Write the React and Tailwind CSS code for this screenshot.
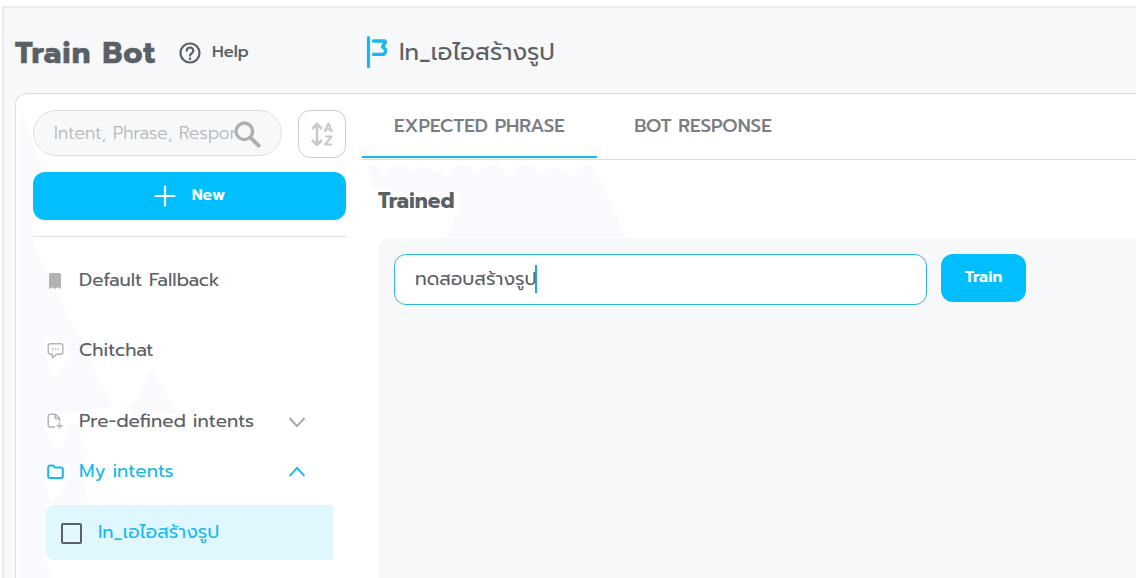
import { useState } from 'react';
import clsx from 'clsx';

const intents = [{ id: 1, name: 'In_เอไอสร้างรูป' }];

const FlagIcon = () => (
  <svg width="22" height="32" viewBox="0 0 22 32" fill="none" stroke="#18b9ee" strokeLinecap="round" strokeLinejoin="round">
    <path d="M2.500 1.600v29" strokeWidth="3.200" />
    <path d="M7.500 5h11.200l.8 1.200-3 4.600 3 2.800v2.400l-1.800 2.400H7.500" strokeWidth="3.400" />
  </svg>
);

const HelpIcon = () => (
  <svg width="22" height="22" viewBox="0 0 22 22" fill="none" stroke="#5b6066" strokeLinecap="round">
    <circle cx="11" cy="11" r="9.500" strokeWidth="2.200" />
    <path d="M7.700 8.700a3.300 3.100 0 1 1 5.400 2.300c-1.300 1-2.100 1.500-2.100 2.700" strokeWidth="2.200" />
    <circle cx="11" cy="16.700" r="1.300" fill="#5b6066" stroke="none" />
  </svg>
);

const SearchIcon = () => (
  <svg width="28" height="28" viewBox="0 0 28 28" fill="none" stroke="#adafb1">
    <circle cx="10.300" cy="10.300" r="8.300" strokeWidth="3.400" />
    <path d="M16.300 16.300l9.500 9.500" strokeWidth="4" />
  </svg>
);

const SortIcon = () => (
  <svg width="24" height="24" viewBox="0 0 24 24" fill="none" stroke="#c7c9cc" strokeWidth="2.600" strokeLinejoin="round">
    <path d="M7 2.500v20M2 7l5-5 5 5M2 18l5 5 5-5" />
    <path d="M14.500 10l3.800-8.500L22.100 10M15.700 7.600h5.200M15.100 14.600h6.400L15.100 22.500h6.800" strokeWidth="2" />
  </svg>
);

const PlusIcon = () => (
  <svg width="22" height="22" viewBox="0 0 22 22" fill="none" stroke="#fff" strokeWidth="2.200" strokeLinecap="round">
    <path d="M11 1.500v19M1.500 11h19" />
  </svg>
);

const BookmarkIcon = () => (
  <svg width="16" height="18" viewBox="0 0 16 18" fill="#b0b3b6">
    <path d="M2 2.500Q2 1 3.500 1h9Q14 1 14 2.500V17l-3.200-1.800L8 17l-2.800-1.800L2 17z" />
  </svg>
);

const ChatIcon = () => (
  <svg width="17" height="18" viewBox="0 0 17 18" fill="none" stroke="#b0b3b6" strokeWidth="1.400" strokeLinejoin="round">
    <path d="M3.200 1.700h10.600a2 2 0 0 1 2 2v6.500a2 2 0 0 1-2 2H9.400l-4 3.800v-3.800H3.200a2 2 0 0 1-2-2V3.700a2 2 0 0 1 2-2z" />
    <path d="M5 7h1.400M7.800 7h1.400M10.600 7H12" strokeWidth="1.300" />
  </svg>
);

const FileAddIcon = () => (
  <svg width="17" height="17" viewBox="0 0 17 17" fill="none" stroke="#b0b3b6" strokeWidth="1.500" strokeLinejoin="round">
    <path d="M8 14H3.200a2 2 0 0 1-2-2V3.200a2 2 0 0 1 2-2h5.300l4 4v3.300" />
    <path d="M8.200 1.400v4.200h4.300" />
    <path d="M12.500 9.800v6M9.500 12.800h6" />
  </svg>
);

const FolderIcon = () => (
  <svg width="17" height="16" viewBox="0 0 17 16" fill="none" stroke="#18b9ee" strokeWidth="2" strokeLinejoin="round">
    <path d="M2.700 1.600h3.600l2 2h5.800a1.700 1.700 0 0 1 1.700 1.700v7a1.700 1.700 0 0 1-1.700 1.700H2.900a1.700 1.700 0 0 1-1.700-1.700V3.200a1.600 1.600 0 0 1 1.500-1.600z" />
  </svg>
);

const Chevron = ({ open }) => (
  <svg width="18" height="12" viewBox="0 0 18 12" fill="none" strokeWidth="1.900" stroke={open ? '#18b9ee' : '#a4a7aa'}>
    <path d={open ? 'M1.500 10.200L9 2l7.500 8.200' : 'M1.500 2L9 10.200 16.500 2'} />
  </svg>
);

// faint mountain pattern behind the sidebar list
const SidebarPattern = () => (
  <svg className="absolute left-0 top-0" width="346" height="484" viewBox="0 0 346 484" fill="#f9fafe">
    <path d="M4 10L25 73 17 82V151L96 312 64 318V340L72 361 64 373 72 410H30V466L35 484H4z" />
    <path d="M132 280Q135 274 139 280L161 319H114z" />
    <path fill="#fff" d="M29 246H50L54 262 39 286 29 262zM29 318H64V330H54L45 356H40L29 334zM29 370H54V385L36 410 29 390z" />
  </svg>
);

const ContentPattern = () => (
  <svg className="absolute left-0 top-0" width="300" height="78" viewBox="0 0 300 78" fill="#f9fafe">
    <path d="M6 5H15L24 17 32 5H42L49 14 57 7H64L86 17 95 5H108L115 15 124 5H136L148 17 158 5H171L179 16 186 8H191L211 17 220 5H230L265 77H83L98 46V32H30L26 28H10z" />
  </svg>
);

const NavItem = ({ icon, label, active, className, chevron, onClick }) => (
  <button type="button" onClick={onClick} className={clsx('flex items-center w-full pl-[31px] pr-14 text-left', className)}>
    <span className="w-8 shrink-0 pt-px">{icon}</span>
    <span className={clsx('grow whitespace-nowrap text-[18.7px]', active ? 'text-[#18b9ee]' : 'text-[#5b6066]')}>{label}</span>
    {chevron && <span className="shrink-0 pt-px"><Chevron open={active} /></span>}
  </button>
);

const App = () => {
  const [tab, setTab] = useState('phrase');
  const [open, setOpen] = useState(true);

  return (
    <div className="w-[1136px] h-[578px] overflow-hidden bg-white pt-[6px] pl-[2px] font-['Prompt','Lato','Noto_Sans_Thai','Noto_Sans',sans-serif]">
      <div className="h-full flex flex-col border-t-2 border-l-2 border-[#eaecee] bg-[#f6f8fa]">
        <header className="flex items-center h-[85px] pt-[3px] shrink-0 text-[#5b6066]">
          <div className="flex items-center w-[362px] pl-[11px]">
            <h1 className="w-[164px] pt-px text-[30px] font-bold leading-none tracking-[1px] whitespace-nowrap [-webkit-text-stroke:0.4px_#5b6066]">Train Bot</h1>
            <span className="pt-px"><HelpIcon /></span>
            <span className="ml-[11px] text-[16.500px] font-medium">Help</span>
          </div>
          <FlagIcon />
          <span className="ml-[11px] text-[24px] whitespace-nowrap">In_เอไอสร้างรูป</span>
        </header>

        <main className="flex grow min-h-0 ml-[11px] bg-white border-t border-l border-[#dcdfe2] rounded-tl-xl overflow-hidden">
          <aside className="relative w-[346px] shrink-0">
            <SidebarPattern />
            <div className="relative">
              <div className="flex items-start gap-4 pl-[17px] pt-4">
                <div className="flex items-center w-[249px] h-[46px] rounded-full border border-[#dcdfe2] bg-[#f6f8fa] pl-5">
                  <span className="w-[181px] shrink-0 pt-px overflow-hidden whitespace-nowrap text-[17.200px] font-light tracking-[0.1px] text-[#b6b9bc]">Intent, Phrase, Response</span>
                  <span className="shrink-0 mt-1 -ml-px"><SearchIcon /></span>
                </div>
                <button type="button" className="flex items-center justify-center size-12 rounded-xl border border-[#c9ccd0] bg-white">
                  <SortIcon />
                </button>
              </div>
              <button type="button" className="flex items-center justify-center w-[313px] h-12 ml-[17px] mt-[14px] rounded-xl bg-[#03befc] text-white">
                <PlusIcon />
                <span className="ml-4 pb-px text-[15.700px] font-semibold">New</span>
              </button>
              <div className="w-[313px] ml-[17px] mt-4 border-t border-[#dcdfe2]" />

              <nav className="pt-[19px]">
                <NavItem icon={<BookmarkIcon />} label="Default Fallback" className="h-12" />
                <NavItem icon={<ChatIcon />} label="Chitchat" className="h-12 mt-[22px]" />
                <NavItem icon={<FileAddIcon />} label="Pre-defined intents" className="h-12 mt-[23px]" chevron />
                <NavItem icon={<FolderIcon />} label="My intents" className="h-12 mt-[2px]" active={open} chevron onClick={() => setOpen(!open)} />
                {open && intents.map((intent) => (
                  <div key={intent.id} className="flex items-center w-[287px] h-[55px] ml-[30px] mt-[10px] pl-[15px] rounded-l-lg bg-[#e1f7fe]">
                    <span className="size-[21px] mt-[2px] rounded-[2px] border-2 border-[#5b6066]" />
                    <span className="ml-4 text-[18.700px] whitespace-nowrap text-[#18b9ee]">{intent.name}</span>
                  </div>
                ))}
              </nav>
            </div>
          </aside>

          <section className="grow min-w-0 flex flex-col">
            <div className="flex h-[66px] shrink-0 border-b border-[#dcdfe2] text-[18.700px] font-medium text-[#7b7d80]">
              <button type="button" onClick={() => setTab('phrase')} className={clsx('w-[235px] h-[64px] pt-[2px] border-b-2 whitespace-nowrap', tab === 'phrase' ? 'border-[#18b9ee]' : 'border-transparent')}>
                EXPECTED PHRASE
              </button>
              <button type="button" onClick={() => setTab('response')} className={clsx('w-[212px] h-[64px] pt-[2px] border-b-2 whitespace-nowrap', tab === 'response' ? 'border-[#18b9ee]' : 'border-transparent')}>
                BOT RESPONSE
              </button>
            </div>
            <div className="relative h-[78px] shrink-0">
              <ContentPattern />
              <h2 className="relative pl-4 pt-[25px] text-[21px] font-bold leading-8 text-[#5b6066]">Trained</h2>
            </div>
            <div className="flex items-start grow ml-4 pl-4 pt-4 rounded-tl-xl bg-[#f6f8fa]">
              <div className="flex items-center w-[533px] h-[51px] pl-5 rounded-xl border border-[#2fb4da] bg-white">
                <span className="text-[18.700px] whitespace-nowrap text-[#5b6066]">ทดสอบสร้างรูป</span>
                <span className="w-[2px] h-7 -ml-[2px] -mt-px bg-[#18a9d6]" />
              </div>
              <button type="button" className="w-[85px] h-12 ml-[14px] pb-[2px] rounded-xl bg-[#03befc] text-[16px] font-semibold text-white">Train</button>
            </div>
          </section>
        </main>
      </div>
    </div>
  );
};

export default App;
